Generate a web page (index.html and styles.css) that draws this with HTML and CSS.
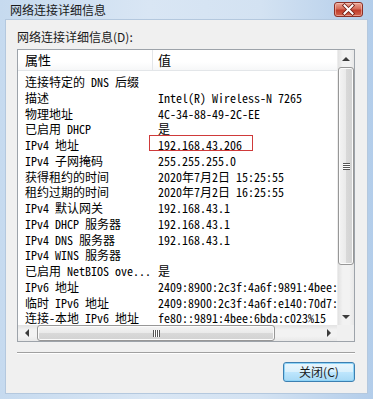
FILE: index.html
```html
<!DOCTYPE html>
<html lang="zh-CN">
<head>
  <meta charset="UTF-8">
  <title>网络连接详细信息</title>
  <link rel="stylesheet" href="styles.css">
</head>
<body>
  <div class="window">
    <div class="titlebar">
      <span class="title">网络连接详细信息</span>
      <div class="close-btn">
        <svg width="29" height="15" viewBox="0 0 29 15">
          <path d="M10.5 3.5 L18.5 11.5 M18.5 3.5 L10.5 11.5" stroke="#6b1a12" stroke-width="3.6" stroke-linecap="square"/>
          <path d="M10.5 3.5 L18.5 11.5 M18.5 3.5 L10.5 11.5" stroke="#ffffff" stroke-width="2" stroke-linecap="square"/>
        </svg>
      </div>
    </div>

    <div class="frame">
      <div class="client">
        <div class="label">网络连接详细信息(<u>D</u>):</div>

        <div class="listview">
          <div class="lv-top">
            <div class="lv-view">
              <div class="lv-header">
                <div class="col-prop">属性</div>
                <div class="col-val">值</div>
              </div>
              <div class="lv-rows">
                <div class="row"><div class="col-prop">连接特定的 DNS 后缀</div><div class="col-val"></div></div>
                <div class="row"><div class="col-prop">描述</div><div class="col-val">Intel(R) Wireless-N 7265</div></div>
                <div class="row"><div class="col-prop">物理地址</div><div class="col-val">4C-34-88-49-2C-EE</div></div>
                <div class="row"><div class="col-prop">已启用 DHCP</div><div class="col-val">是</div></div>
                <div class="row"><div class="col-prop">IPv4 地址</div><div class="col-val">192.168.43.206<span class="mark"></span></div></div>
                <div class="row"><div class="col-prop">IPv4 子网掩码</div><div class="col-val">255.255.255.0</div></div>
                <div class="row"><div class="col-prop">获得租约的时间</div><div class="col-val">2020年7月2日 15:25:55</div></div>
                <div class="row"><div class="col-prop">租约过期的时间</div><div class="col-val">2020年7月2日 16:25:55</div></div>
                <div class="row"><div class="col-prop">IPv4 默认网关</div><div class="col-val">192.168.43.1</div></div>
                <div class="row"><div class="col-prop">IPv4 DHCP 服务器</div><div class="col-val">192.168.43.1</div></div>
                <div class="row"><div class="col-prop">IPv4 DNS 服务器</div><div class="col-val">192.168.43.1</div></div>
                <div class="row"><div class="col-prop">IPv4 WINS 服务器</div><div class="col-val"></div></div>
                <div class="row"><div class="col-prop">已启用 NetBIOS ove...</div><div class="col-val">是</div></div>
                <div class="row"><div class="col-prop">IPv6 地址</div><div class="col-val">2409:8900:2c3f:4a6f:9891:4bee:</div></div>
                <div class="row"><div class="col-prop">临时 IPv6 地址</div><div class="col-val">2409:8900:2c3f:4a6f:e140:70d7:</div></div>
                <div class="row"><div class="col-prop">连接-本地 IPv6 地址</div><div class="col-val">fe80::9891:4bee:6bda:c023%15</div></div>
              </div>
            </div>

            <!-- vertical scrollbar -->
            <div class="vscroll">
              <div class="sb-btn"><span class="arrow up"></span></div>
              <div class="v-thumb"><span class="grip-h"></span></div>
              <div class="sb-space"></div>
              <div class="sb-btn"><span class="arrow down"></span></div>
            </div>
          </div>

          <!-- horizontal scrollbar -->
          <div class="lv-bottom">
            <div class="hscroll">
              <div class="sb-btn"><span class="arrow left"></span></div>
              <div class="h-thumb"><span class="grip-v"></span></div>
              <div class="sb-space"></div>
              <div class="sb-btn"><span class="arrow right"></span></div>
            </div>
            <div class="corner"></div>
          </div>
        </div>

        <div class="separator"></div>

        <div class="buttons">
          <button class="btn">关闭(<u>C</u>)</button>
        </div>
      </div>
    </div>
  </div>
</body>
</html>
```

FILE: styles.css
```css
html, body {
  margin: 0;
  padding: 0;
  width: 373px;
  height: 399px;
  overflow: hidden;
  font-family: "Noto Sans CJK SC", sans-serif;
  font-size: 12px;
  color: #000;
}

/* Aero window frame */
.window {
  width: 373px;
  height: 399px;
  display: flex;
  flex-direction: column;
  background: linear-gradient(90deg, #c6daef 0%, #d9e6f4 40%, #d3e2f2 70%, #b3cdea 100%);
}

.titlebar {
  height: 20px;
  flex: none;
  display: flex;
  align-items: flex-start;
  padding-left: 10px;
}

.title {
  line-height: 19px;
  font-size: 12px;
  color: #1a1a1a;
}

.close-btn {
  margin-left: auto;
  margin-right: 10px;
  margin-top: 2px;
  width: 29px;
  height: 15px;
  box-sizing: border-box;
  border: 1px solid #8c2f25;
  border-radius: 3px;
  background: linear-gradient(180deg, #e9a797 0%, #d66b58 45%, #c03c2a 55%, #d2644e 100%);
  box-shadow: inset 0 0 0 1px rgba(255, 210, 200, 0.5);
  display: flex;
}

.close-btn svg {
  margin: -1px;
}

.frame {
  flex: 1;
  min-height: 0;
  display: flex;
  padding: 0 6px 6px 6px;
}

.client {
  flex: 1;
  min-width: 0;
  display: flex;
  flex-direction: column;
  background: #f0f0f0;
  padding: 0 12px 0 11px;
  box-shadow: 0 0 0 1px #b4c8de;
}

.label {
  margin-top: 9px;
  line-height: 16px;
  height: 16px;
  color: #1a1a1a;
}

.label u,
.btn u {
  text-decoration: none;
}

/* List view */
.listview {
  margin-top: 4px;
  height: 293px;
  flex: none;
  box-sizing: border-box;
  border: 1px solid #9da3aa;
  background: #fff;
  display: flex;
  flex-direction: column;
  min-width: 0;
}

.lv-top {
  display: flex;
  height: 275px;
  min-width: 0;
}

.lv-view {
  flex: 1;
  min-width: 0;
  overflow: hidden;
  font-family: "Noto Sans Mono CJK SC", "Noto Sans CJK SC", monospace;
  font-size: 12px;
}

.lv-header {
  height: 21px;
  display: flex;
  align-items: center;
  background: linear-gradient(180deg, #ffffff 0%, #ffffff 60%, #f6f7f8 100%);
  border-bottom: 1px solid #e3e6e9;
  box-sizing: border-box;
  white-space: nowrap;
}

.lv-header .col-prop {
  border-right: 1px solid #e3e6e9;
  height: 21px;
  line-height: 20px;
  box-sizing: border-box;
  font-family: "Noto Sans CJK SC", sans-serif;
  font-size: 13px;
}

.lv-header .col-val {
  line-height: 20px;
  font-family: "Noto Sans CJK SC", sans-serif;
  font-size: 13px;
}

.lv-rows {
  padding-top: 3px;
}

.row {
  height: 15.75px;
  line-height: 15px;
  display: flex;
  white-space: nowrap;
}

.col-prop {
  width: 135px;
  flex: none;
  padding-left: 7px;
  box-sizing: border-box;
}

.col-val {
  padding-left: 5px;
  flex: none;
  position: relative;
}

/* red annotation box around the IPv4 address */
.mark {
  position: absolute;
  left: -4px;
  top: -2px;
  width: 104px;
  height: 16px;
  box-sizing: border-box;
  border: 1px solid #cf3a3a;
}

/* Scrollbars */
.vscroll {
  width: 17px;
  flex: none;
  display: flex;
  flex-direction: column;
  background: linear-gradient(90deg, #e2e2e2 0%, #f2f2f2 30%, #f2f2f2 70%, #e8e8e8 100%);
  border-left: 1px solid #ededed;
  box-sizing: border-box;
}

.hscroll {
  flex: 1;
  min-width: 0;
  display: flex;
  background: linear-gradient(180deg, #e2e2e2 0%, #f2f2f2 30%, #f2f2f2 70%, #e8e8e8 100%);
}

.sb-btn {
  width: 16px;
  height: 17px;
  flex: none;
  display: flex;
  align-items: center;
  justify-content: center;
}

.hscroll .sb-btn {
  width: 17px;
  height: 16px;
}

.sb-space {
  flex: 1;
}

.arrow {
  width: 0;
  height: 0;
  border: 4px solid transparent;
}

.arrow.up {
  border-bottom: 4px solid #3c3c3c;
  border-top-width: 0;
}

.arrow.down {
  border-top: 4px solid #3c3c3c;
  border-bottom-width: 0;
}

.arrow.left {
  border-right: 4px solid #3c3c3c;
  border-left-width: 0;
}

.arrow.right {
  border-left: 4px solid #3c3c3c;
  border-right-width: 0;
}

.v-thumb {
  height: 198px;
  flex: none;
  box-sizing: border-box;
  border: 1px solid #979797;
  border-radius: 3px;
  background: linear-gradient(90deg, #f4f4f4 0%, #eaeaea 50%, #d9d9d9 51%, #d2d2d2 100%);
  box-shadow: inset 0 0 0 1px #fbfbfb;
  display: flex;
  align-items: center;
  justify-content: center;
}

.h-thumb {
  width: 238px;
  flex: none;
  margin-left: 2px;
  box-sizing: border-box;
  border: 1px solid #979797;
  border-radius: 3px;
  background: linear-gradient(180deg, #f4f4f4 0%, #eaeaea 50%, #d9d9d9 51%, #d2d2d2 100%);
  box-shadow: inset 0 0 0 1px #fbfbfb;
  display: flex;
  align-items: center;
  justify-content: center;
}

.grip-h {
  width: 7px;
  height: 7px;
  background: repeating-linear-gradient(180deg, #555 0 1px, #fff 1px 2px);
}

.grip-v {
  width: 7px;
  height: 7px;
  background: repeating-linear-gradient(90deg, #555 0 1px, #fff 1px 2px);
}

.lv-bottom {
  height: 16px;
  display: flex;
}

.corner {
  width: 17px;
  flex: none;
  background: #f0f0f0;
}

/* Bottom area */
.separator {
  margin-top: 10px;
  height: 1px;
  background: #a0a0a0;
  border-bottom: 1px solid #ffffff;
}

.buttons {
  display: flex;
  justify-content: flex-end;
  margin-top: 8px;
}

.btn {
  width: 72px;
  height: 20px;
  padding: 0;
  font-family: "Noto Sans CJK SC", sans-serif;
  font-size: 12px;
  line-height: 18px;
  color: #1a1a1a;
  border: 1px solid #3c7fb1;
  border-radius: 3px;
  background: linear-gradient(180deg, #eaf6fd 0%, #d9f0fc 50%, #bee6fd 51%, #a7d9f5 100%);
  box-shadow: inset 0 0 0 1px #8fd4f7;
}
```
